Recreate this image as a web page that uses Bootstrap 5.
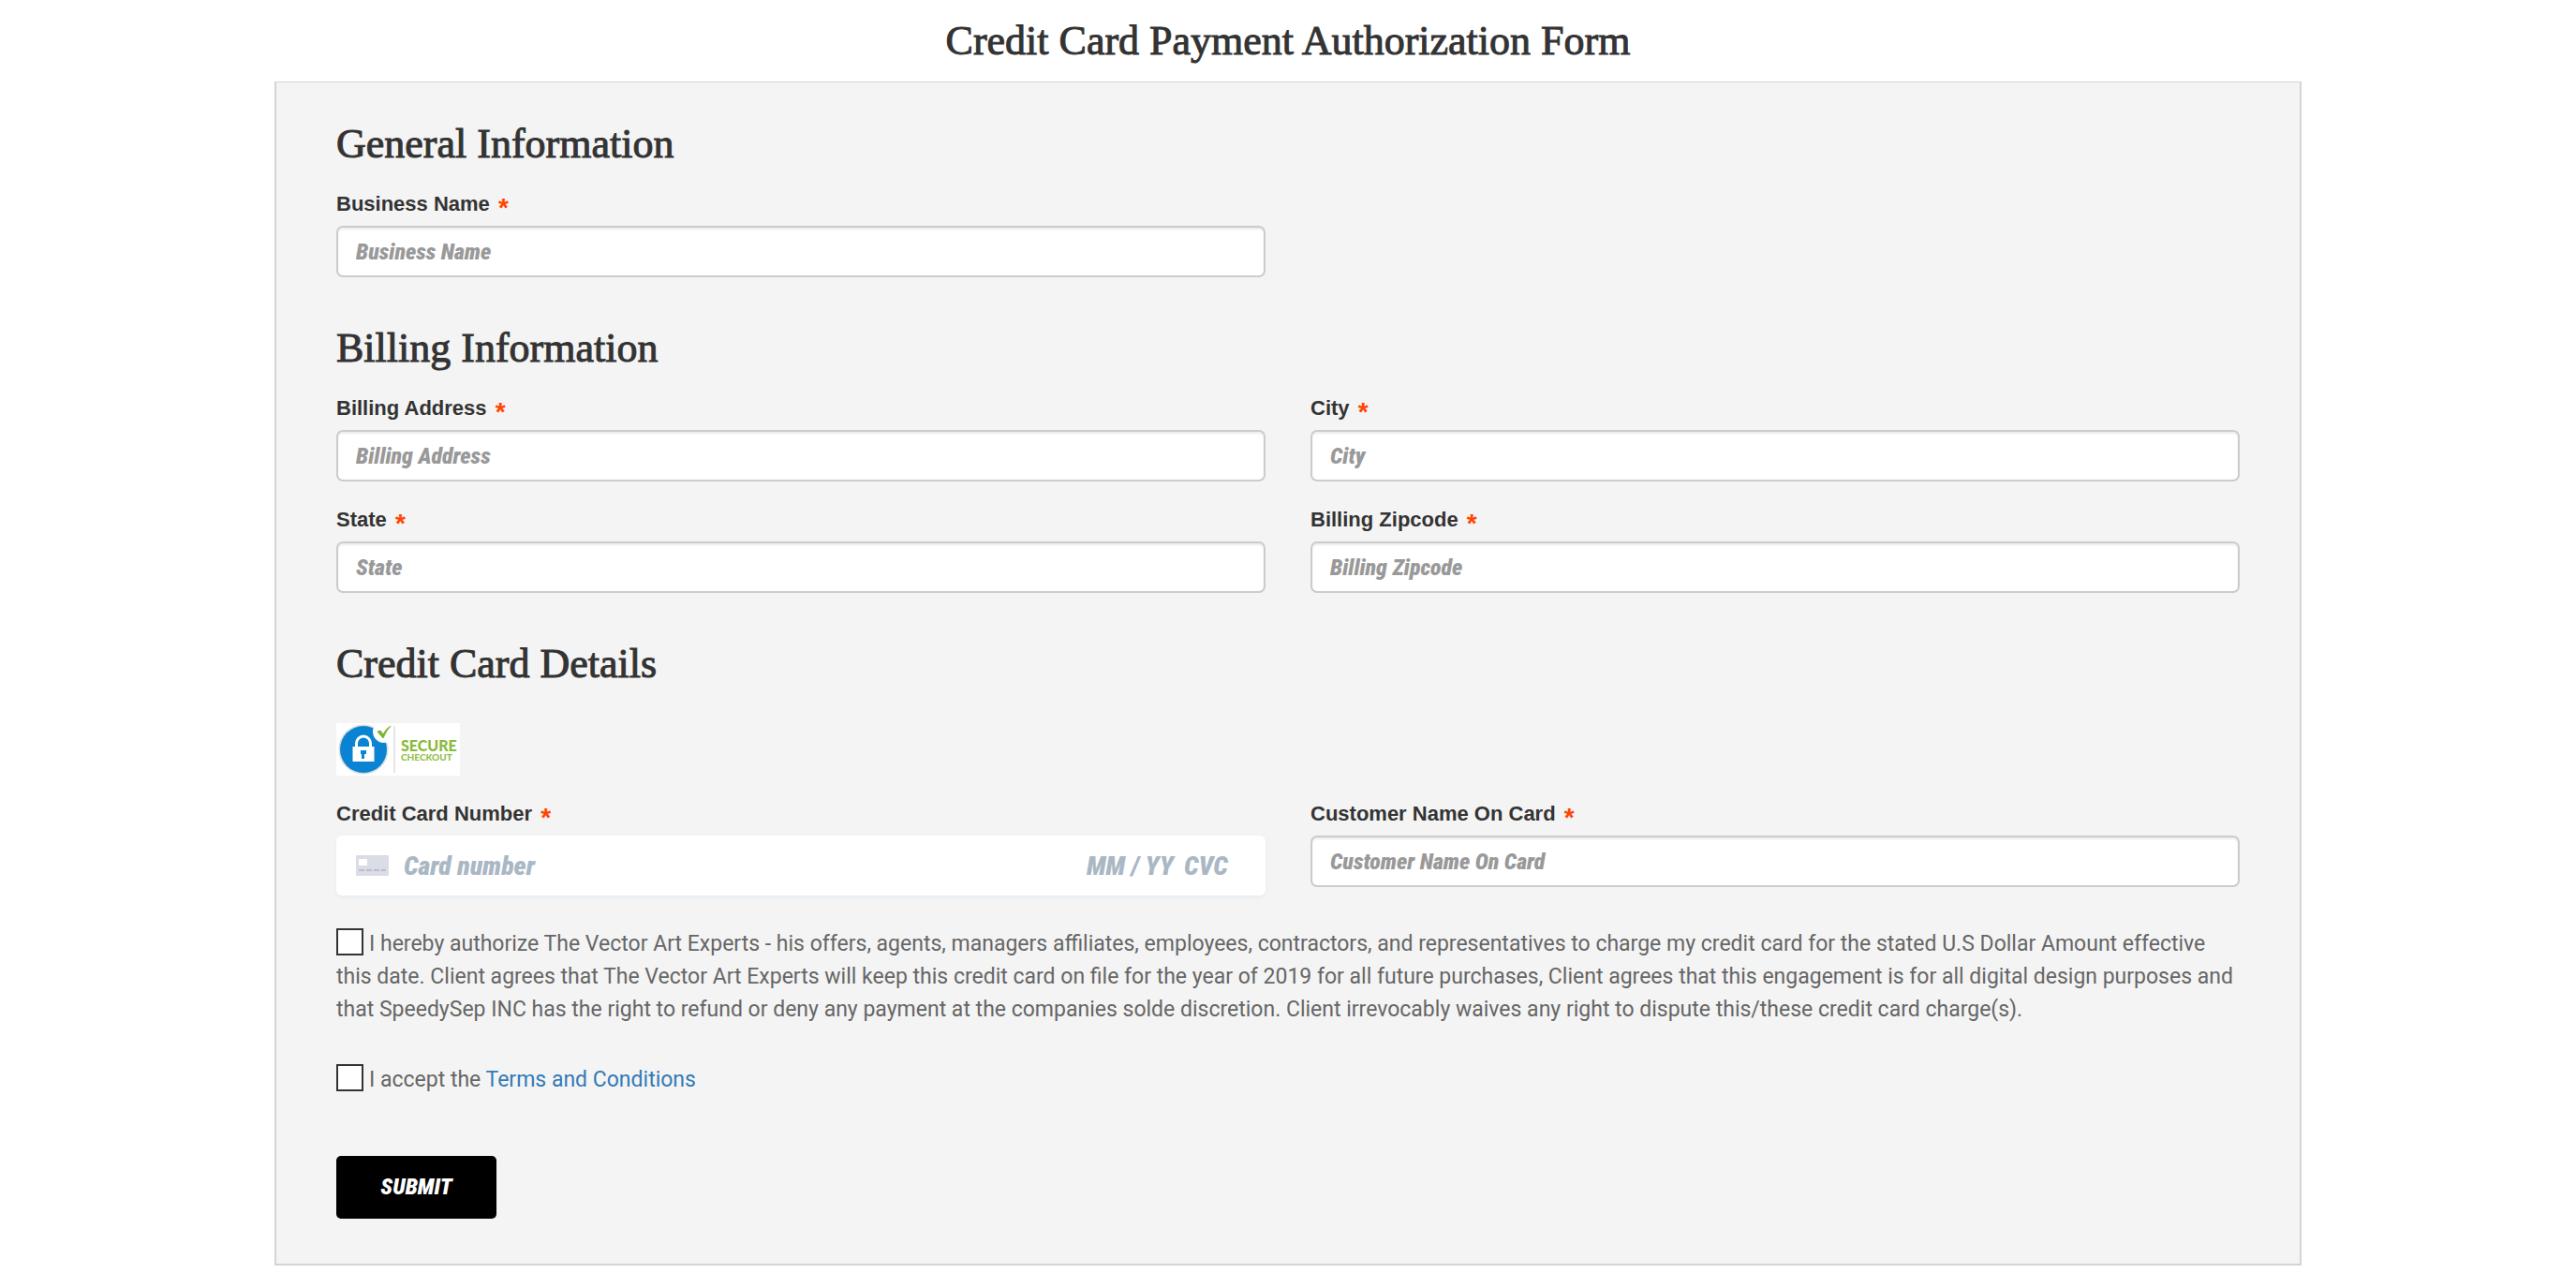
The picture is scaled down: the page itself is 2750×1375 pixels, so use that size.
<!DOCTYPE html>
<html lang="en">
<head>
<meta charset="utf-8">
<meta name="viewport" content="width=device-width, initial-scale=1">
<title>Credit Card Payment Authorization Form</title>
<link href="https://cdn.jsdelivr.net/npm/bootstrap@5.3.0/dist/css/bootstrap.min.css" rel="stylesheet">
<style>
body { font-family: Roboto, sans-serif; font-size: 23px; line-height: 35px; color: #666; background: #fff; }
.page-wrap { max-width: 2164px; padding-top: 20px; }
.serif-title { font-family: "Liberation Serif", serif; font-size: 44px; line-height: 48px; font-weight: 400; color: #333; -webkit-text-stroke: 1px #333; }
.form-panel { margin-top: 19px; background: #f4f4f4; border: 2px solid #d4d4d4; border-top-width: 1px; padding: 42px 64px 48px; }
.section-title { margin-bottom: 25px; }
.row-fields { --bs-gutter-x: 48px; row-gap: 26px; }
.section-gap { margin-bottom: 52px; }
.field-label { display: block; font: bold 22px/30px "Liberation Sans", sans-serif; color: #333; margin-bottom: 8px; }
.field-label span { color: #ff4500; margin-left: 3px; font-size: 28px; line-height: 1px; vertical-align: -6px; }
.field-box, .card-box input, .submit-btn { font-family: "Roboto Condensed", "Liberation Sans", sans-serif; font-weight: 900; font-style: italic; }
.field-box { height: 55px; padding: 0 19px; font-size: 24px; border: 2px solid #ccc; border-radius: 7px; box-shadow: inset 0 2px 2px rgba(0,0,0,.075); }
.field-box::placeholder { color: #999; }
.card-box { height: 64px; padding: 0 35px 0 21px; background: #fff; border-radius: 6px; box-shadow: 0 2px 5px #e6ebf1; }
.card-box input { border: 0; padding: 0; background: transparent; font-size: 28px; min-width: 0; }
.card-box input::placeholder { color: #aab7c4; }
.in-exp { width: 104px; }
.in-cvc { width: 52px; }
.secure-logo { margin: 39px 0 26px; }
.card-glyph { margin-right: 16px; }
.card-row { margin-bottom: 34px; }
.consent { margin-bottom: 40px; }
.accept { margin-bottom: 64px; }
.tick { appearance: none; width: 29px; height: 29px; background: #fff; border: 2px solid #333; margin: 0 6px 0 0; vertical-align: -5px; }
.tick:checked { background: #333; }
.terms-link { color: #337ab7; text-decoration: none; }
.submit-btn { height: 67px; width: 171px; background: #000; color: #fff; font-size: 24px; border: 0; border-radius: 5px; }
</style>
</head>
<body>
<main class="page-wrap mx-auto">
  <h1 class="serif-title text-center mb-0">Credit Card Payment Authorization Form</h1>
  <form class="form-panel">
    <h2 class="serif-title section-title">General Information</h2>
    <div class="row row-fields section-gap">
      <div class="col-md-6">
        <label class="field-label" for="business">Business Name <span>*</span></label>
        <input class="form-control field-box" id="business" type="text" placeholder="Business Name">
      </div>
    </div>

    <h2 class="serif-title section-title">Billing Information</h2>
    <div class="row row-fields section-gap">
      <div class="col-md-6">
        <label class="field-label" for="address">Billing Address <span>*</span></label>
        <input class="form-control field-box" id="address" type="text" placeholder="Billing Address">
      </div>
      <div class="col-md-6">
        <label class="field-label" for="city">City <span>*</span></label>
        <input class="form-control field-box" id="city" type="text" placeholder="City">
      </div>
      <div class="col-md-6">
        <label class="field-label" for="state">State <span>*</span></label>
        <input class="form-control field-box" id="state" type="text" placeholder="State">
      </div>
      <div class="col-md-6">
        <label class="field-label" for="zip">Billing Zipcode <span>*</span></label>
        <input class="form-control field-box" id="zip" type="text" placeholder="Billing Zipcode">
      </div>
    </div>

    <h2 class="serif-title section-title">Credit Card Details</h2>
    <svg class="secure-logo d-block" width="132" height="56" viewBox="0 0 132 56" role="img" aria-label="Secure checkout">
      <rect width="132" height="56" fill="#fff"/>
      <circle cx="29" cy="28" r="26.500" fill="#d9dcde"/>
      <circle cx="29" cy="28" r="25" fill="#0a84d2"/>
      <circle cx="51" cy="9" r="12" fill="#fff"/>
      <path d="M21.500 26v-4.500a7.500 7.500 0 0 1 15 0V26" fill="none" stroke="#fff" stroke-width="3"/>
      <rect x="17.500" y="25" width="23" height="16" fill="#fff"/>
      <path d="M26 29h6v4h-2v5h-3v-5h-1z" fill="#0a84d2"/>
      <path d="M44 9l3-1 3 4q3-6 8-9-5 5-8 13z" fill="#7ab32e" stroke="#7ab32e" stroke-width="1"/>
      <path d="M62 3v50" stroke="#e6e6e6" stroke-width="2"/>
      <text x="69" y="30" font-family="Lato, sans-serif" font-weight="900" font-size="16" fill="#8aba3a">SECURE</text>
      <text x="69" y="40" font-family="Lato, sans-serif" font-weight="900" font-size="10" fill="#93c048">CHECKOUT</text>
    </svg>
    <div class="row row-fields card-row">
      <div class="col-md-6">
        <label class="field-label" for="cardnumber">Credit Card Number <span>*</span></label>
        <div class="card-box d-flex align-items-center">
          <svg class="flex-shrink-0 card-glyph" width="35" height="22" viewBox="0 0 35 22" aria-hidden="true">
            <rect width="35" height="22" rx="1" fill="#dadde5"/>
            <rect x="3" y="4" width="9" height="7" rx="1" fill="#fff"/>
            <path d="M3 16h6M11 16h6M19 16h6M27 16h5" stroke="#b9bece" stroke-width="2"/>
          </svg>
          <input class="flex-grow-1" id="cardnumber" type="text" inputmode="numeric" placeholder="Card number">
          <input class="in-exp" type="text" placeholder="MM / YY" aria-label="Expiry date">
          <input class="in-cvc" type="text" placeholder="CVC" aria-label="Security code">
        </div>
      </div>
      <div class="col-md-6">
        <label class="field-label" for="holder">Customer Name On Card <span>*</span></label>
        <input class="form-control field-box" id="holder" type="text" placeholder="Customer Name On Card">
      </div>
    </div>

    <div class="consent">
      <input class="tick" type="checkbox" id="authorize"><label class="d-inline" for="authorize">I hereby authorize The Vector Art Experts - his offers, agents, managers affiliates, employees, contractors, and representatives to charge my credit card for the stated U.S Dollar Amount effective this date. Client agrees that The Vector Art Experts will keep this credit card on file for the year of 2019 for all future purchases, Client agrees that this engagement is for all digital design purposes and that SpeedySep INC has the right to refund or deny any payment at the companies solde discretion. Client irrevocably waives any right to dispute this/these credit card charge(s).</label>
    </div>
    <div class="accept">
      <input class="tick" type="checkbox" id="accept"><label class="d-inline" for="accept">I accept the <a class="terms-link" href="#terms">Terms and Conditions</a></label>
    </div>
    <button class="submit-btn" type="submit">SUBMIT</button>
  </form>
</main>
<script src="https://cdn.jsdelivr.net/npm/bootstrap@5.3.0/dist/js/bootstrap.bundle.min.js"></script>
</body>
</html>
